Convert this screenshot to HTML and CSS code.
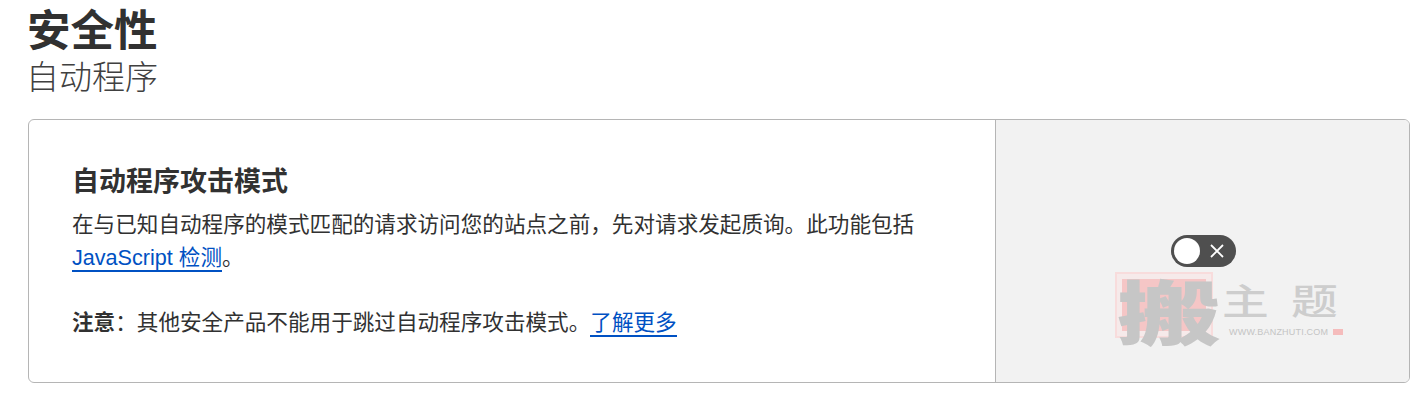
FILE: index.html
```html
<!DOCTYPE html>
<html lang="zh-CN">
<head>
  <meta charset="UTF-8">
  <meta name="viewport" content="width=device-width, initial-scale=1.0">
  <link rel="stylesheet" href="styles.css">
  <title>安全性</title>
</head>
<body>
  <div class="page">
    <h1>安全性</h1>
    <h2 class="subtitle">自动程序</h2>
    <div class="card">
      <div class="card-body">
        <h3>自动程序攻击模式</h3>
        <p>在与已知自动程序的模式匹配的请求访问您的站点之前，先对请求发起质询。此功能包括 <a href="#">JavaScript</a><a href="#"> 检测</a>。</p>
        <p class="note"><strong>注意</strong>：其他安全产品不能用于跳过自动程序攻击模式。<a href="#">了解更多</a></p>
      </div>
      <div class="card-side">
        <div class="toggle">
          <span class="knob"></span>
          <svg class="toggle-x" width="14" height="14" viewBox="0 0 14 14">
            <path d="M1 1L13 13M13 1L1 13" stroke="#fff" stroke-width="1.8" fill="none"/>
          </svg>
        </div>
      </div>
    </div>
  </div>
  <!-- watermark sits over the card -->
  <div class="watermark">
    <div class="stamp"><span>搬</span></div>
    <div class="wm-right">
      <div class="wm-title"><span>主</span><span>题</span></div>
      <div class="wm-url">WWW.BANZHUTI.COM <i></i></div>
    </div>
  </div>
</body>
</html>
```

FILE: styles.css
```css
body {
  margin: 0;
  background: #fff;
  font-family: "Noto Sans CJK SC", "Liberation Sans", sans-serif;
  color: #313131;
  overflow: hidden;
}

.page {
  padding: 0 17px 0 28px;
}

h1 {
  margin: 0 0 0 -1px;
  font-size: 43.5px;
  line-height: 56px;
  font-weight: 700;
}

.subtitle {
  margin: 0 0 24px -2px;
  font-size: 33px;
  line-height: 39px;
  font-weight: 300;
  color: #404040;
}

.card {
  display: flex;
  height: 262px;
  border: 1px solid #b5b5b5;
  border-radius: 6px;
  overflow: hidden;
}

.card-body {
  width: 967px;
  box-sizing: border-box;
  padding: 41px 43px 0;
  border-right: 1px solid #b5b5b5;
}

.card-body h3 {
  margin: 0 0 9px;
  font-size: 27px;
  line-height: 38px;
  font-weight: 700;
}

.card-body p {
  margin: 0;
  font-size: 21.6px;
  line-height: 33px;
  font-family: "Liberation Sans", "Noto Sans CJK SC", sans-serif;
}

.card-body .note {
  margin-top: 32px;
}

.card-body a {
  color: #0051c3;
  text-decoration: none;
  border-bottom: 2px solid #0051c3;
}

.card-side {
  flex: 1;
  background: #f2f2f2;
  display: flex;
  justify-content: center;
  padding: 115px 0 0 2px;
}

.toggle {
  width: 65px;
  height: 32px;
  box-sizing: border-box;
  border-radius: 16px;
  background: #4f4f4f;
  padding: 3px;
  display: flex;
  align-items: center;
  gap: 10px;
}

.knob {
  width: 26px;
  height: 26px;
  border-radius: 50%;
  background: #fff;
}

.watermark {
  position: absolute;
  left: 1115px;
  top: 272px;
  display: flex;
  gap: 9px;
  color: #cdcdcd;
}

.stamp {
  width: 98px;
  height: 66px;
  box-sizing: border-box;
  border: 2px solid #f8dcdc;
  background: #f5c6c6;
  position: relative;
  box-shadow: inset 0 0 0 5px #f6eaea;
}

.stamp span {
  position: absolute;
  left: 0;
  top: -17px;
  font-size: 104px;
  line-height: 104px;
  font-weight: 900;
  color: #c6c6c6;
  transform: scaleY(.68);
}

.wm-right {
  padding-top: 8px;
}

.wm-title {
  display: flex;
  gap: 21px;
  height: 38px;
  font-size: 36px;
  line-height: 38px;
  font-weight: 500;
  white-space: nowrap;
}

.wm-title span {
  width: 48px;
  transform: scaleX(1.3);
  transform-origin: left center;
}

.wm-url {
  font-family: "Liberation Sans", sans-serif;
  font-size: 9px;
  letter-spacing: .2px;
  line-height: 12px;
  margin: 8px 0 0 7px;
  color: #c4c4c4;
  white-space: nowrap;
}

.wm-url i {
  display: inline-block;
  width: 10px;
  height: 6px;
  margin-left: 2px;
  background: #f5bcbc;
}
```
